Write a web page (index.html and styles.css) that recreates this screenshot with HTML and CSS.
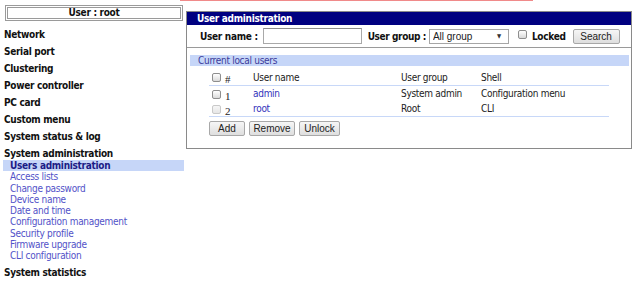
FILE: index.html
```html
<!DOCTYPE html>
<html lang="en">
<head>
  <meta charset="UTF-8" />
  <meta name="viewport" content="width=device-width, initial-scale=1" />
  <title>User administration</title>
  <link rel="stylesheet" href="styles.css">
</head>
<body>

<div class="topline"></div>

<div class="page">
  <aside class="side">
    <div class="whoami">User : root</div>
    <ul class="menu">
      <li>Network</li>
      <li>Serial port</li>
      <li>Clustering</li>
      <li>Power controller</li>
      <li>PC card</li>
      <li>Custom menu</li>
      <li>System status &amp; log</li>
      <li>System administration
        <ul class="sub">
          <li class="active">Users administration</li>
          <li>Access lists</li>
          <li>Change password</li>
          <li>Device name</li>
          <li>Date and time</li>
          <li>Configuration management</li>
          <li>Security profile</li>
          <li>Firmware upgrade</li>
          <li>CLI configuration</li>
        </ul>
      </li>
      <li class="last">System statistics</li>
    </ul>
  </aside>

  <main class="content">
    <section class="panel">
      <h1 class="panel-title">User administration</h1>

      <form class="search">
        <label class="lbl">User name :</label>
        <input class="txt" type="text">
        <label class="lbl lbl-group">User group :</label>
        <span class="select"><select><option>All group</option></select></span>
        <input class="chk" type="checkbox">
        <label class="lbl lbl-locked">Locked</label>
        <button type="button" class="btn btn-search">Search</button>
      </form>

      <div class="panel-body">
        <div class="bar">Current local users</div>
        <table class="users">
          <thead>
            <tr>
              <th class="c-num"><input class="chk" type="checkbox"><span class="num">#</span></th>
              <th class="c-name">User name</th>
              <th class="c-group">User group</th>
              <th>Shell</th>
            </tr>
          </thead>
          <tbody>
            <tr>
              <td class="c-num"><input class="chk" type="checkbox"><span class="num">1</span></td>
              <td class="c-name"><a href="#">admin</a></td>
              <td>System admin</td>
              <td>Configuration menu</td>
            </tr>
            <tr>
              <td class="c-num"><input class="chk" type="checkbox" disabled><span class="num">2</span></td>
              <td class="c-name"><a href="#">root</a></td>
              <td>Root</td>
              <td>CLI</td>
            </tr>
          </tbody>
        </table>
        <div class="actions">
          <button type="button" class="btn btn-add">Add</button>
          <button type="button" class="btn btn-remove">Remove</button>
          <button type="button" class="btn btn-unlock">Unlock</button>
        </div>
      </div>
    </section>
  </main>
</div>

</body>
</html>
```

FILE: styles.css
```css
body {
  margin: 0;
  font-family: "DejaVu Sans Condensed", "DejaVu Sans", sans-serif;
  font-size: 10px;
  letter-spacing: -0.3px;
  color: #111;
  background: #fff;
}
.topline {
  height: 1px;
  width: 353px;
  margin-left: 180px;
  background-color: #f08a8a;
}
.page {
  display: flex;
  align-items: flex-start;
}

/* left menu */
.side {
  width: 185px;
  flex: none;
}
.whoami {
  margin: 4px 2px 0 5px;
  height: 10px;
  line-height: 10px;
  border: 3px double #9a9a9a;
  text-align: center;
  font-weight: bold;
}
.menu {
  list-style: none;
  margin: 5px 0 0;
  padding: 0;
}
.menu > li {
  padding-left: 4px;
  line-height: 17px;
  font-weight: bold;
  color: #111;
}
.menu > li.last {
  margin-top: 3px;
}
.sub {
  list-style: none;
  margin: -2px 0 0 -1px;
  padding: 0;
  width: 181px;
}
.sub li {
  padding-left: 7px;
  line-height: 11.25px;
  font-weight: normal;
  color: #5252c8;
}
.sub li.active {
  background-color: #c6d6f8;
  font-weight: bold;
  color: #1c1c86;
}

/* panel */
.content {
  flex: none;
  margin: 10px 0 0 1px;
}
.panel {
  width: 444px;
  border: 1px solid #8a8a8a;
  padding-bottom: 12px;
}
.panel-title {
  margin: 0;
  height: 13px;
  line-height: 13px;
  padding-left: 10px;
  background-color: #000080;
  color: #fff;
  font-size: 10px;
  font-weight: bold;
}
.search {
  display: flex;
  align-items: center;
  height: 22px;
  padding-left: 13px;
  border-bottom: 1px solid #9a9a9a;
  margin: 0;
  white-space: nowrap;
}
.search > * {
  flex: none;
}
.lbl {
  font-weight: bold;
  color: #111;
}
.txt {
  box-sizing: border-box;
  width: 99px;
  height: 16px;
  margin: 0 0 0 5px;
  border: 1px solid #a9a9a9;
  border-top-color: #8c8c8c;
  padding: 0;
}
.lbl-group {
  margin-left: 6px;
  letter-spacing: -0.4px;
}
.select {
  position: relative;
  margin-left: 3px;
}
.select select {
  appearance: none;
  box-sizing: border-box;
  width: 80px;
  height: 15px;
  margin: 0;
  padding: 0 0 0 3px;
  border: 1px solid #a6a6a6;
  background: #fff;
  font-family: "Liberation Sans", Arial, sans-serif;
  font-size: 10px;
  letter-spacing: 0;
  color: #222;
  display: block;
}
.select::after {
  content: "\25BC";
  position: absolute;
  right: 8px;
  top: 3px;
  font-size: 6px;
  color: #333;
  pointer-events: none;
}
.chk {
  appearance: none;
  box-sizing: border-box;
  width: 9px;
  height: 9px;
  margin: 0;
  border: 1px solid #8e8e8e;
  border-radius: 2px;
  background: linear-gradient(#ffffff, #dadada);
}
.chk:disabled {
  border-color: #c9c9c9;
  background: linear-gradient(#f6f6f6, #e6e6e6);
}
.search .chk {
  margin: -3px 0 0 9px;
}
.lbl-locked {
  margin-left: 5px;
}
.btn {
  box-sizing: border-box;
  height: 15px;
  padding: 0;
  border: 1px solid #a8a8a8;
  border-radius: 2px;
  background: linear-gradient(#f6f6f6, #dedede);
  font-family: "Liberation Sans", Arial, sans-serif;
  font-size: 10px;
  letter-spacing: 0;
  color: #222;
  line-height: 13px;
}
.btn-search {
  width: 47px;
  margin-left: 7px;
}

/* users table */
.panel-body {
  padding-top: 7px;
}
.bar {
  margin: 0 2px 0 3px;
  height: 11px;
  line-height: 11px;
  padding-left: 8px;
  background-color: #c6d6f8;
  color: #3b3b9b;
}
.users {
  width: 400px;
  margin: 3px 0 0 22px;
  border-collapse: collapse;
}
.users th,
.users td {
  padding: 0;
  text-align: left;
  font-weight: normal;
  color: #222;
  height: 15px;
}
.users thead th {
  height: 16px;
  border-bottom: 1px solid #c8d8f8;
}
.users tbody tr:last-child td {
  border-bottom: 1px solid #c8d8f8;
}
.users .c-num {
  width: 44px;
  padding-left: 3px;
  box-sizing: border-box;
}
.users .c-name {
  width: 148px;
}
.users .c-group {
  width: 80px;
}
.users .chk {
  vertical-align: -1px;
}
.num {
  margin-left: 4px;
  font-family: "Liberation Serif", serif;
  font-size: 11px;
  position: relative;
  top: 2px;
}
.users a {
  color: #3333bb;
  text-decoration: none;
}
.actions {
  display: flex;
  gap: 4px;
  margin: 4px 0 0 22px;
}
.btn-add {
  width: 36px;
}
.btn-remove {
  width: 46px;
}
.btn-unlock {
  width: 41px;
}
```
